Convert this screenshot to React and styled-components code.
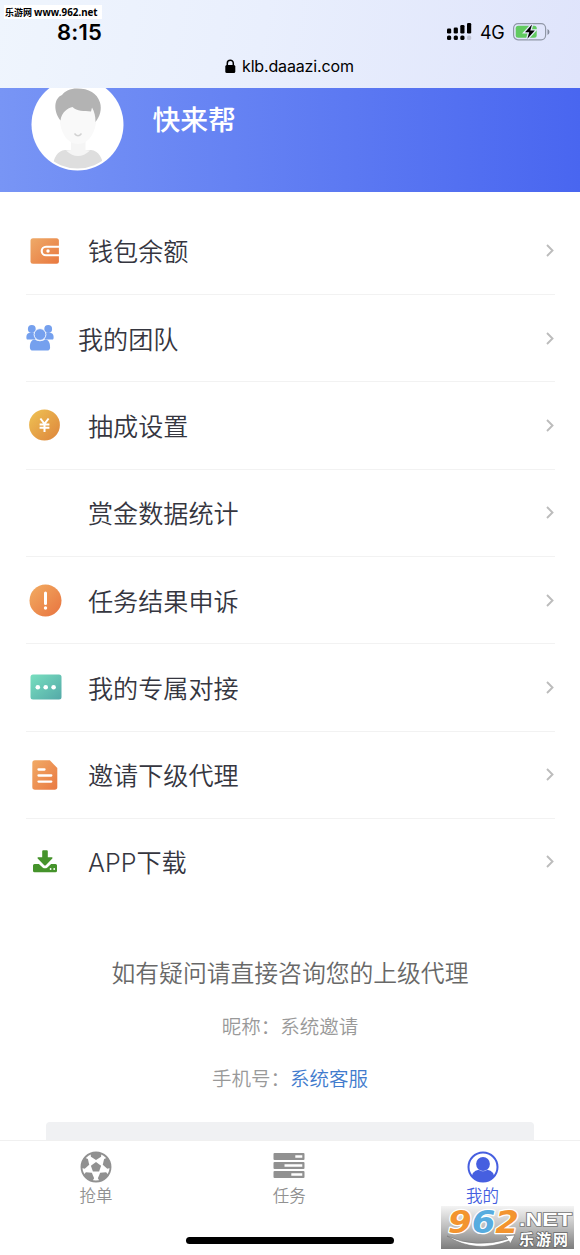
import React from "react";
import styled, { createGlobalStyle } from "styled-components";

const GlobalStyle = createGlobalStyle`
	* {
		box-sizing: border-box;
	}

	body {
		margin: 0;
		background: #fff;
		font-family: "Noto Sans CJK SC", "Noto Sans", sans-serif;
		font-weight: 350;
	}

	svg {
		display: block;
		flex: none;
	}
`;

const WalletIcon = () => (
	<svg width="30" height="26" viewBox="0 0 30 26">
		<defs>
			<linearGradient id="wallet" x1="0" y1="0" x2="1" y2="1">
				<stop offset="0" stopColor="#eeaa68" />
				<stop offset="1" stopColor="#e9783f" />
			</linearGradient>
		</defs>
		<rect x=".5" y=".3" width="28.4" height="25.4" rx="2.5" fill="url(#wallet)" />
		<path d="M30 8.7H16a4.300 4.300 0 0 0 0 8.600H30" fill="none" stroke="#fff" strokeWidth="2.100" />
		<circle cx="18" cy="13" r="1.700" fill="#fff" />
	</svg>
);

const TeamIcon = () => (
	<svg width="28" height="26" viewBox="0 0 28 26" fill="#75a0ee">
		<circle cx="5.800" cy="4" r="3.900" />
		<circle cx="22.200" cy="4" r="3.900" />
		<path d="M3 8h6.500v6.500h-8C-.2 14.500-.2 8.500 3 8zM25 8h-6.500v6.500h8c1.700 0 1.700-6-1.500-6.500z" />
		<circle cx="14" cy="9.500" r="5.900" stroke="#fff" strokeWidth=".9" />
		<path d="M8.500 14.600q5.500 3.400 11 0c3.300.5 4.600 3.500 4.600 7.800 0 2-1 3.100-3.100 3.100H7c-2.100 0-3.100-1.100-3.100-3.100 0-4.300 1.300-7.300 4.600-7.800z" />
	</svg>
);

const CoinIcon = () => (
	<svg width="32" height="32" viewBox="0 0 32 32">
		<defs>
			<linearGradient id="coin" x1="0" y1="0" x2="1" y2="1">
				<stop offset="0" stopColor="#efc354" />
				<stop offset="1" stopColor="#dd843b" />
			</linearGradient>
		</defs>
		<circle cx="15.500" cy="16" r="15.400" fill="url(#coin)" />
		<path d="M11.400 9.500l4.100 5.300 4.100-5.300M10.600 15.500h9.800M10.600 18.800h9.800M15.500 15v8" fill="none" stroke="#fff" strokeWidth="2" />
	</svg>
);

const AlertIcon = () => (
	<svg width="33" height="33" viewBox="0 0 33 33">
		<defs>
			<linearGradient id="alert" x1="0" y1="0" x2="1" y2="1">
				<stop offset="0" stopColor="#f2ad62" />
				<stop offset="1" stopColor="#e8733f" />
			</linearGradient>
		</defs>
		<circle cx="16.500" cy="16.500" r="16" fill="url(#alert)" />
		<path d="M16.500 9v10.500" stroke="#fff" strokeWidth="3" strokeLinecap="round" />
		<circle cx="16.500" cy="24" r="1.700" fill="#fff" />
	</svg>
);

const ChatIcon = () => (
	<svg width="34" height="26" viewBox="-2 0 34 26">
		<defs>
			<linearGradient id="chat" x1="0" y1="0" x2="1" y2="1">
				<stop offset="0" stopColor="#78dfbf" />
				<stop offset="1" stopColor="#54a9a8" />
			</linearGradient>
		</defs>
		<rect x=".5" y=".5" width="31" height="25" rx="2.500" fill="url(#chat)" />
		<circle cx="7.800" cy="13.200" r="2.300" fill="#fff" />
		<circle cx="15.700" cy="13.200" r="2.300" fill="#fff" />
		<circle cx="23.600" cy="13.200" r="2.300" fill="#fff" />
	</svg>
);

const DocIcon = () => (
	<svg width="26" height="30" viewBox="0 0 26 30">
		<defs>
			<linearGradient id="doc" x1="0" y1="0" x2="1" y2="1">
				<stop offset="0" stopColor="#f1aa65" />
				<stop offset="1" stopColor="#e97942" />
			</linearGradient>
		</defs>
		<path d="M3 .3h14.800L25.300 8v19a2.700 2.700 0 0 1-2.700 2.700H3A2.700 2.700 0 0 1 .3 27V3A2.700 2.700 0 0 1 3 .3z" fill="url(#doc)" />
		<path d="M6.500 9.500h6M6.500 15.500h12.800M6.500 21.600h12.800" stroke="#fff" strokeWidth="2.300" strokeLinecap="round" />
	</svg>
);

const DownloadIcon = () => (
	<svg width="24" height="23" viewBox="0 0 24 23" fill="#45932b">
		<path d="M1.500 14h4.400l3.700 3.400q2.400 1.700 4.800 0L18.100 14h4.400q1.500 0 1.500 1.500v5.200q0 1.500-1.500 1.500h-21Q0 22.200 0 20.700v-5.200Q0 14 1.500 14z" />
		<path d="M10.200.3h3.600q1 0 1 1v5.900h4.100q1.300.2.400 1.300l-6.300 6.500q-1 1-2 0L4.700 8.500q-.9-1.100.4-1.300h4.100V1.300q0-1 1-1z" />
		<circle cx="17.600" cy="19" r=".9" fill="#fff" />
		<circle cx="21.200" cy="19" r=".9" fill="#fff" />
	</svg>
);

const BallIcon = () => (
	<svg width="32" height="32" viewBox="0 0 32 32">
		<defs>
			<clipPath id="ball">
				<circle cx="16" cy="16" r="14.500" />
			</clipPath>
		</defs>
		<circle cx="16" cy="16" r="14.500" fill="#fff" stroke="#919191" strokeWidth="1.900" />
		<g fill="#919191" clipPath="url(#ball)">
			<path d="M16 11l5.100 3.700-2 5.900h-6.200l-2-5.900z" />
			{[0, 72, 144, 216, 288].map((angle) => (
				<path key={angle} d="M10.500 0h11l-.4 5.800L16 8.900l-5.100-3.100z" transform={`rotate(${angle} 16 16)`} />
			))}
		</g>
	</svg>
);

const TaskIcon = () => (
	<svg width="32" height="32" viewBox="0 0 32 32">
		<g fill="#919191">
			<rect x=".5" y="2" width="31" height="7" rx="1" />
			<rect x=".5" y="11" width="31" height="7" rx="1" />
			<rect x=".5" y="20" width="31" height="7" rx="1" />
		</g>
		<path d="M22.300 5.500h7M11.500 14.500h17.800M18.300 23.500h11" stroke="#fff" strokeWidth="2.400" />
	</svg>
);

const UserIcon = () => (
	<svg width="32" height="32" viewBox="0 0 32 32">
		<defs>
			<clipPath id="user">
				<circle cx="16" cy="16" r="14.500" />
			</clipPath>
		</defs>
		<circle cx="16" cy="16" r="14.500" fill="#fff" stroke="#465fe0" strokeWidth="2" />
		<g fill="#465fe0" clipPath="url(#user)">
			<circle cx="16" cy="13" r="6.900" />
			<path d="M4.500 29q0-9.500 7.200-10.200 4.300 3 8.600 0 7.200.7 7.200 10.200v3h-23z" />
		</g>
	</svg>
);

const Arrow = () => (
	<svg width="8" height="13" viewBox="0 0 8 13" fill="none" stroke="#bcbcbc" strokeWidth="1.900">
		<path d="M1 1l5.500 5.500L1 12" />
	</svg>
);

const AvatarFace = () => (
	<svg width="93" height="93" viewBox="0 0 93 93">
		<defs>
			<clipPath id="avatar">
				<circle cx="46.500" cy="46.500" r="44" />
			</clipPath>
		</defs>
		<circle cx="46.500" cy="46.500" r="46" fill="#fff" />
		<g clipPath="url(#avatar)">
			<path d="M21 93c1-13 5-20 13-21h26c8 1 12 8 13 21z" fill="#dedede" />
			<path d="M40 60h14.500v12l4.500.500q-12 11-24 0l5-.5z" fill="#f5f5f5" />
			<path d="M29 30q0-10 18-10t18 10v15c-2 13-9 21-18 21s-16-8-18-21z" fill="#f9f9f9" />
			<path d="M29.500 42.500C22 33 23 20 31 17c3-4 8-6.500 15-6.500 12 0 20 4.500 23 14 2 7 0 14-4.500 19.500 0-6-1-10-3.500-14.500l-1 4c-7-.5-14 0-18.500-4.500-4.500 1-11 5-12 13.500z" fill="#b3b3b3" />
		</g>
		<path d="M43.500 55.500q3.500 4.500 7 0" fill="none" stroke="#d2d2d2" strokeWidth="1.500" />
	</svg>
);

const SignalIcon = () => (
	<svg width="25" height="19" viewBox="0 0 25 19">
		<rect x="0" y="5.500" width="4.200" height="5" rx="1.300" />
		<rect x="6.700" y="4.500" width="4.200" height="6" rx="1.300" />
		<rect x="13.300" y="2" width="4.200" height="8.500" rx="1.300" />
		<rect x="20" y="0" width="4.200" height="10.500" rx="1.300" />
		<rect x="0" y="12.500" width="4.200" height="4.500" rx="1.600" />
		<rect x="6.700" y="12.500" width="4.200" height="4.500" rx="1.600" />
		<rect x="13.300" y="12.500" width="4.200" height="4.500" rx="1.600" />
		<rect x="20" y="12.500" width="4.200" height="4.500" rx="1.600" fill="#c3c6d7" />
	</svg>
);

const BatteryIcon = () => (
	<svg width="37" height="18" viewBox="0 0 37 18">
		<rect x=".6" y=".6" width="32" height="16.200" rx="4.500" fill="none" stroke="#9097a6" strokeWidth="1.200" />
		<path d="M34.500 6v6q2-1 2-3t-2-3z" fill="#858c9d" />
		<rect x="2.700" y="2.700" width="21" height="12" rx="2.500" fill="#62ca60" />
		<path d="M19 1.500l-7 7.700h4.200l-1.800 6.500 7.400-8.200h-4.500z" fill="#000" stroke="#e5eafb" strokeWidth="2.600" paintOrder="stroke" />
	</svg>
);

const LockIcon = () => (
	<svg width="11" height="15" viewBox="0 0 11 15">
		<rect x=".3" y="6" width="10" height="8" rx="1.500" />
		<path d="M2.300 7V4.200a3 3 0 0 1 6 0V7" fill="none" stroke="#000" strokeWidth="1.500" />
	</svg>
);

// promo mark laid over the bottom right corner
const SiteLogo = () => (
	<svg width="133" height="43" viewBox="0 0 133 43">
		<defs>
			<linearGradient id="plate" x1="0" y1="0" x2="0" y2="1">
				<stop offset="0" stopColor="#f4f4f4" />
				<stop offset=".5" stopColor="#bdbdbd" />
				<stop offset="1" stopColor="#7c7c7c" />
			</linearGradient>
		</defs>
		<rect width="133" height="43" fill="url(#plate)" />
		<text x="7" y="26.500" fontFamily="DejaVu Sans, sans-serif" fontWeight="700" fontStyle="italic" fontSize="32" textLength="71" lengthAdjust="spacingAndGlyphs" stroke="#fff" strokeWidth="2.500" paintOrder="stroke" strokeLinejoin="round">
			<tspan fill="#f3942f">9</tspan><tspan fill="#57acdf">6</tspan><tspan fill="#f3942f">2</tspan>
		</text>
		<text x="78" y="20" fontFamily="Liberation Sans, Arial, sans-serif" fontWeight="700" fontSize="18" textLength="53" lengthAdjust="spacingAndGlyphs" fill="#fff" stroke="#777" strokeWidth="1.500" paintOrder="stroke">.NET</text>
		<path d="M6 30q29 13 61 3l-3-3 10-1-5 9-1-3Q34 48 6 30z" fill="#fff" stroke="#777" strokeWidth=".6" />
		<text x="78" y="38.500" fontFamily="Noto Sans CJK SC, sans-serif" fontWeight="700" fontSize="15" textLength="49" fill="#fff" stroke="#666" strokeWidth="1.500" paintOrder="stroke">乐游网</text>
	</svg>
);

const menu = [
	{ label: "钱包余额", icon: <WalletIcon /> },
	{ label: "我的团队", icon: <TeamIcon />, compact: true },
	{ label: "抽成设置", icon: <CoinIcon /> },
	{ label: "赏金数据统计" },
	{ label: "任务结果申诉", icon: <AlertIcon /> },
	{ label: "我的专属对接", icon: <ChatIcon /> },
	{ label: "邀请下级代理", icon: <DocIcon /> },
	{ label: "APP下载", icon: <DownloadIcon /> },
];

const tabs = [
	{ label: "抢单", icon: <BallIcon /> },
	{ label: "任务", icon: <TaskIcon /> },
	{ label: "我的", icon: <UserIcon />, active: true },
];

const App = () => {
	return (
		<Page>
			<GlobalStyle />
			<StatusArea>
				<StatusRow>
					<Time>8:15</Time>
					<StatusIcons>
						<SignalIcon />
						<Network>4G</Network>
						<BatteryIcon />
					</StatusIcons>
				</StatusRow>
				<AddressBar>
					<LockIcon />
					<Address>klb.daaazi.com</Address>
				</AddressBar>
			</StatusArea>
			<Banner>
				<Avatar>
					<AvatarFace />
				</Avatar>
				<UserName>快来帮</UserName>
			</Banner>
			<Menu>
				{menu.map(({ label, icon, compact }) => (
					<MenuItem key={label}>
						<IconSlot $compact={compact}>{icon}</IconSlot>
						<MenuLabel>{label}</MenuLabel>
						<Arrow />
					</MenuItem>
				))}
			</Menu>
			<Contact>
				<ContactTitle>如有疑问请直接咨询您的上级代理</ContactTitle>
				<ContactLine>昵称：系统邀请</ContactLine>
				<ContactLine>
					手机号：<ContactLink>系统客服</ContactLink>
				</ContactLine>
			</Contact>
			<Panel />
			<TabBar>
				{tabs.map(({ label, icon, active }) => (
					<Tab key={label} $active={active}>
						{icon}
						<TabLabel>{label}</TabLabel>
					</Tab>
				))}
			</TabBar>
			<HomeIndicator />
			<SiteTag>
				乐游网 <SiteUrl>www.962.net</SiteUrl>
			</SiteTag>
			<LogoOverlay>
				<SiteLogo />
			</LogoOverlay>
		</Page>
	);
};

const Page = styled.div`
	position: relative;
	display: flex;
	flex-direction: column;
	width: 580px;
	height: 1255px;
	overflow: hidden;
	background: #fff;
`;

const StatusArea = styled.header`
	flex: none;
	height: 88px;
	padding-top: 19px;
	background: linear-gradient(100deg, #eff5fd 0%, #e9effd 45%, #dfe4fb 100%);
	color: #000;
	font-family: Inter, sans-serif;
`;

const StatusRow = styled.div`
	display: flex;
	align-items: center;
	justify-content: space-between;
	height: 26px;
	padding: 0 30px 0 57px;
`;

const Time = styled.span`
	font-size: 22px;
	font-weight: 600;
	letter-spacing: 0.2px;
`;

const StatusIcons = styled.div`
	display: flex;
	align-items: center;
`;

const Network = styled.span`
	width: 25px;
	margin: 1px 8px 0;
	font-size: 18px;
	font-weight: 400;
	letter-spacing: -0.3px;
`;

const AddressBar = styled.div`
	display: flex;
	align-items: center;
	height: 42px;
	padding-left: 225px;
`;

const Address = styled.span`
	margin-left: 6px;
	font-size: 16px;
	font-weight: 400;
	letter-spacing: -0.15px;
`;

const Banner = styled.section`
	display: flex;
	flex: none;
	height: 103.5px;
	padding-left: 30.5px;
	overflow: hidden;
	background: linear-gradient(90deg, #7895f5, #4966f0);
`;

const Avatar = styled.div`
	margin-top: -10px;
`;

const UserName = styled.h1`
	margin: 10px 0 0 29px;
	color: #fff;
	font-size: 27.8px;
	font-weight: 500;
	line-height: 40px;
`;

const Menu = styled.ul`
	flex: none;
	margin: 0;
	padding: 16px 25px 0 26px;
	list-style: none;
`;

const MenuItem = styled.li`
	display: flex;
	align-items: center;
	height: 87.35px;
	padding-right: 1px;
	border-bottom: 1px solid #f2f2f2;

	&:last-child {
		height: 86px;
		border-bottom: 0;
	}
`;

const IconSlot = styled.div`
	display: flex;
	justify-content: center;
	width: ${({ $compact }) => ($compact ? "28px" : "38px")};
	margin-right: 24px;
`;

const MenuLabel = styled.span`
	flex: 1;
	margin-top: 3px;
	color: #35363f;
	font-family: Inter, "Noto Sans CJK SC", sans-serif;
	font-size: 25.1px;
	line-height: 36px;
`;

const Contact = styled.section`
	flex: none;
	padding-top: 49.5px;
	color: #999;
	text-align: center;
`;

const ContactTitle = styled.p`
	margin: 0 0 10px;
	color: #686868;
	font-size: 23.8px;
	line-height: 36px;
`;

const ContactLine = styled.p`
	margin: 0;
	font-size: 19.5px;
	line-height: 51.5px;
`;

const ContactLink = styled.a`
	color: #417bcd;
`;

const Panel = styled.div`
	flex: 1;
	margin: 19px 46px 0;
	border-radius: 4px 4px 0 0;
	background: #f0f1f3;
`;

const TabBar = styled.nav`
	display: grid;
	grid-template-columns: repeat(3, 193.3px);
	flex: none;
	height: 97px;
	margin-left: -0.7px;
	padding-top: 9.5px;
	border-top: 1px solid #f0f0f0;
	background: #fff;
`;

const Tab = styled.div`
	display: flex;
	flex-direction: column;
	align-items: center;
	color: ${({ $active }) => ($active ? "#465fe0" : "#919191")};
`;

const TabLabel = styled.span`
	font-size: 16.5px;
	line-height: 24px;
`;

const HomeIndicator = styled.div`
	flex: none;
	align-self: center;
	width: 208px;
	height: 7px;
	margin-bottom: 11px;
	border-radius: 4px;
	background: #000;
`;

const SiteTag = styled.div`
	position: absolute;
	top: 5px;
	left: 4px;
	width: 98px;
	height: 14px;
	padding-left: 1px;
	background: #fff;
	color: #000;
	font-size: 9px;
	font-weight: 700;
	line-height: 15px;
	white-space: nowrap;
`;

const SiteUrl = styled.span`
	font-family: "Noto Sans", sans-serif;
	font-size: 9.8px;
`;

const LogoOverlay = styled.div`
	position: absolute;
	top: 1206px;
	left: 441px;
`;

export default App;
